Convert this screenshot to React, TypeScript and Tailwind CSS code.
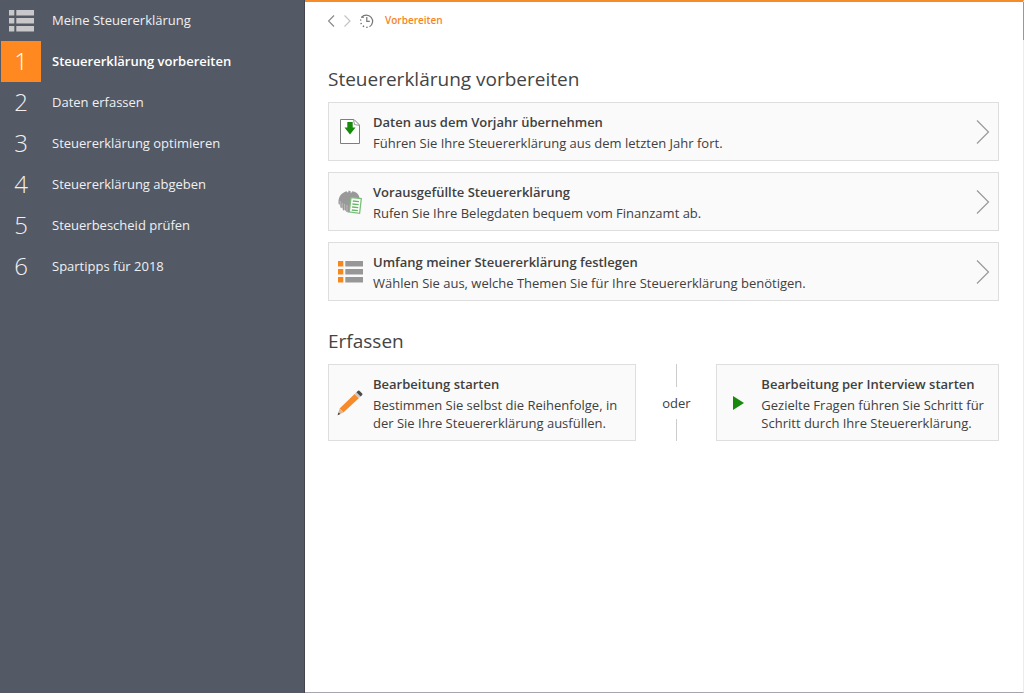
import React from 'react';

interface Step {
  id: number;
  label: string;
}

interface CardProps {
  icon: React.ReactNode;
  title: string;
  text: string;
  arrow?: boolean;
}

const steps: Step[] = [
  { id: 1, label: 'Steuererklärung vorbereiten' },
  { id: 2, label: 'Daten erfassen' },
  { id: 3, label: 'Steuererklärung optimieren' },
  { id: 4, label: 'Steuererklärung abgeben' },
  { id: 5, label: 'Steuerbescheid prüfen' },
  { id: 6, label: 'Spartipps für 2018' },
];

const ListIcon: React.FC<{ square: string; bar: string }> = ({ square, bar }) => (
  <svg width="25" height="22" viewBox="0 0 25 22">
    {[0, 8, 16].map((y) => (
      <g key={y}>
        <rect x="0" y={y} width="5.3" height="5.5" fill={square} />
        <rect x="7.3" y={y} width="17.7" height="5.5" fill={bar} />
      </g>
    ))}
  </svg>
);

const ImportIcon = () => (
  <svg width="20" height="26" viewBox="0 0 20 26" fill="none">
    <path d="M.5 .5H14L19.5 6V24.5H.5Z" fill="#fff" stroke="#7b807b" />
    <path d="M13.5 .5L14.5 5.5L19.5 6.5" stroke="#9a9f9a" />
    <path d="M7.3 3H12.7V8.5H15.5L10 15.5L4.5 8.5H7.3Z" fill="#178a0c" />
  </svg>
);

const EagleIcon = () => (
  <svg width="24" height="24" viewBox="0 0 24 24">
    <path
      d="M8.5 1.2L10 2.8L10.7 .6L12.6 1.2L12.8 3.2L14.5 1.2C18.3 1.6 20.8 4 21.6 8L21 14L12 20L11 22.5L8.5 22L7 20L5 20.5L4.5 18L2.4 17.5L2.2 15L.6 14C-.2 8 2.5 3 8.5 1.2Z"
      fill="#999"
    />
    <path d="M4.2 13V18M6.6 14V20M9 15V22M2.2 11V15" stroke="#ccc" strokeWidth=".7" />
    <path d="M13 7.6L23.3 8.6L21.6 23.3L11.3 22Z" fill="#fff" stroke="#7cc07c" strokeWidth="1.3" />
    <path
      d="M14.8 11L21 11.6M14.4 14L20.7 14.6M14.1 17L20.3 17.6M13.8 20L19.9 20.6"
      stroke="#68b568"
      strokeWidth="1.4"
    />
  </svg>
);

const PencilIcon = () => (
  <svg width="26" height="26" viewBox="0 0 26 26">
    <path d="M17.6 4L21.8 8.2L6.4 22.4L2.6 18.6Z" fill="#f68b2c" />
    <path d="M2.6 18.6L6.4 22.4L.6 25.3Z" fill="#d9b89a" />
    <path d="M1.5 22.4L3.4 23.9L.6 25.3Z" fill="#444" />
    <path d="M17.6 4L19.4 2.3L23.6 6.5L21.8 8.2Z" fill="#c9c9c9" />
    <path d="M19.4 2.3L21 .8Q21.8 .3 22.4 .8L25.2 3.6Q25.7 4.3 25.2 5L23.6 6.5Z" fill="#4d4d4d" />
  </svg>
);

const PlayIcon = () => (
  <svg width="11" height="14" viewBox="0 0 11 14">
    <path d="M0 0L11 7L0 14Z" fill="#178a0c" />
  </svg>
);

const HistoryIcon = () => (
  <svg width="16" height="16" viewBox="0 0 16 16" fill="none" stroke="#777">
    <path d="M2.6 4.2A6.3 6.3 0 1 1 10.5 13.8" strokeWidth="1.2" />
    <path d="M8.6 14.3A6.3 6.3 0 0 1 1.8 6.5" strokeWidth="1.4" strokeDasharray="1.4 2.2" />
    <path d="M2 4.3H5" />
    <path d="M7.8 4V8.4H10.8" strokeWidth="1.2" />
  </svg>
);

const Card: React.FC<CardProps> = ({ icon, title, text, arrow }) => (
  <button
    type="button"
    className="flex w-full items-center border border-[#dedede] bg-[#fafafa] text-left hover:bg-white"
  >
    <span className="flex w-11 shrink-0 items-center justify-center pr-0.5">{icon}</span>
    <span className="min-w-0 flex-1 pt-[9px] pb-2 text-[#404040]">
      <span className="block text-[13px] leading-5 font-semibold">{title}</span>
      <span className="block pt-0.5 text-[13px] leading-[18px]">{text}</span>
    </span>
    {arrow && (
      <svg width="14" height="24" viewBox="0 0 14 24" fill="none" className="mr-2 shrink-0">
        <path d="M1 .5L12.5 12L1 23.5" stroke="#999" strokeWidth="1.2" />
      </svg>
    )}
  </button>
);

const Sidebar = () => (
  <nav className="w-[305px] shrink-0 border-r border-[#44444f] bg-[#535965] text-[13px] text-[#f0f0f2]">
    <a href="#start" className="flex h-[41px] items-center">
      <span className="w-[42px] pl-[9px]">
        <ListIcon square="#c8c8ca" bar="#c8c8ca" />
      </span>
      <span className="pt-px pl-2.5">Meine Steuererklärung</span>
    </a>
    {steps.map((step) => {
      const active = step.id === 1;
      return (
        <a
          key={step.id}
          href={`#schritt-${step.id}`}
          aria-current={active ? 'step' : undefined}
          className="flex h-[41px] items-center"
        >
          <span
            className={
              active
                ? 'ml-px flex h-full w-10 items-center justify-center bg-[#ff8820] pb-0.5 text-2xl font-light text-white'
                : 'ml-px flex h-full w-10 items-center justify-center pb-0.5 text-2xl font-light'
            }
          >
            {step.id}
          </span>
          <span className={active ? 'pt-px pl-[11px] font-semibold text-white' : 'pt-px pl-[11px]'}>
            {step.label}
          </span>
        </a>
      );
    })}
  </nav>
);

const App: React.FC = () => {
  return (
    <div className="flex min-h-screen bg-white font-['Open_Sans','Noto_Sans',sans-serif]">
      <Sidebar />
      <main className="relative min-w-0 flex-1 border-t-2 border-r border-b border-t-[#f68b28] border-r-[#ececec] border-b-[#a5a5ad] pr-6 pl-[23px]">
        <div className="absolute top-0 -right-px h-[38px] w-px bg-[#7fa888]" />
        <div className="flex h-[37px] items-center">
          <button type="button" aria-label="Zurück" className="w-4">
            <svg width="8" height="12" viewBox="0 0 8 12" fill="none">
              <path d="M6 .5L.5 6L6 11.5" stroke="#888" strokeWidth="1.2" />
            </svg>
          </button>
          <button type="button" aria-label="Vor" className="w-[15px]">
            <svg width="8" height="12" viewBox="0 0 8 12" fill="none">
              <path d="M.5 .5L6 6L.5 11.5" stroke="#c4c4c4" strokeWidth="1.2" />
            </svg>
          </button>
          <button type="button" aria-label="Verlauf">
            <HistoryIcon />
          </button>
          <span className="pl-2.5 text-[10px] font-semibold text-[#f6851f]">Vorbereiten</span>
        </div>

        <h1 className="pt-[26px] text-[19px] leading-7 text-[#444]">Steuererklärung vorbereiten</h1>
        <div className="mt-[9px] flex flex-col gap-[11px]">
          <Card
            icon={<ImportIcon />}
            title="Daten aus dem Vorjahr übernehmen"
            text="Führen Sie Ihre Steuererklärung aus dem letzten Jahr fort."
            arrow
          />
          <Card
            icon={<EagleIcon />}
            title="Vorausgefüllte Steuererklärung"
            text="Rufen Sie Ihre Belegdaten bequem vom Finanzamt ab."
            arrow
          />
          <Card
            icon={<ListIcon square="#f6871f" bar="#979797" />}
            title="Umfang meiner Steuererklärung festlegen"
            text="Wählen Sie aus, welche Themen Sie für Ihre Steuererklärung benötigen."
            arrow
          />
        </div>

        <h2 className="pt-[26px] text-[19px] leading-7 text-[#444]">Erfassen</h2>
        <div className="mt-[9px] grid grid-cols-[12fr_80px_11fr]">
          <Card
            icon={<PencilIcon />}
            title="Bearbeitung starten"
            text="Bestimmen Sie selbst die Reihenfolge, in der Sie Ihre Steuererklärung ausfüllen."
          />
          <div className="flex flex-col items-center text-[13px] leading-8 font-medium text-[#404040]">
            <span className="w-px flex-1 bg-[#ccc]" />
            oder
            <span className="w-px flex-1 bg-[#ccc]" />
          </div>
          <Card
            icon={<PlayIcon />}
            title="Bearbeitung per Interview starten"
            text="Gezielte Fragen führen Sie Schritt für Schritt durch Ihre Steuererklärung."
          />
        </div>
      </main>
    </div>
  );
};

export default App;
